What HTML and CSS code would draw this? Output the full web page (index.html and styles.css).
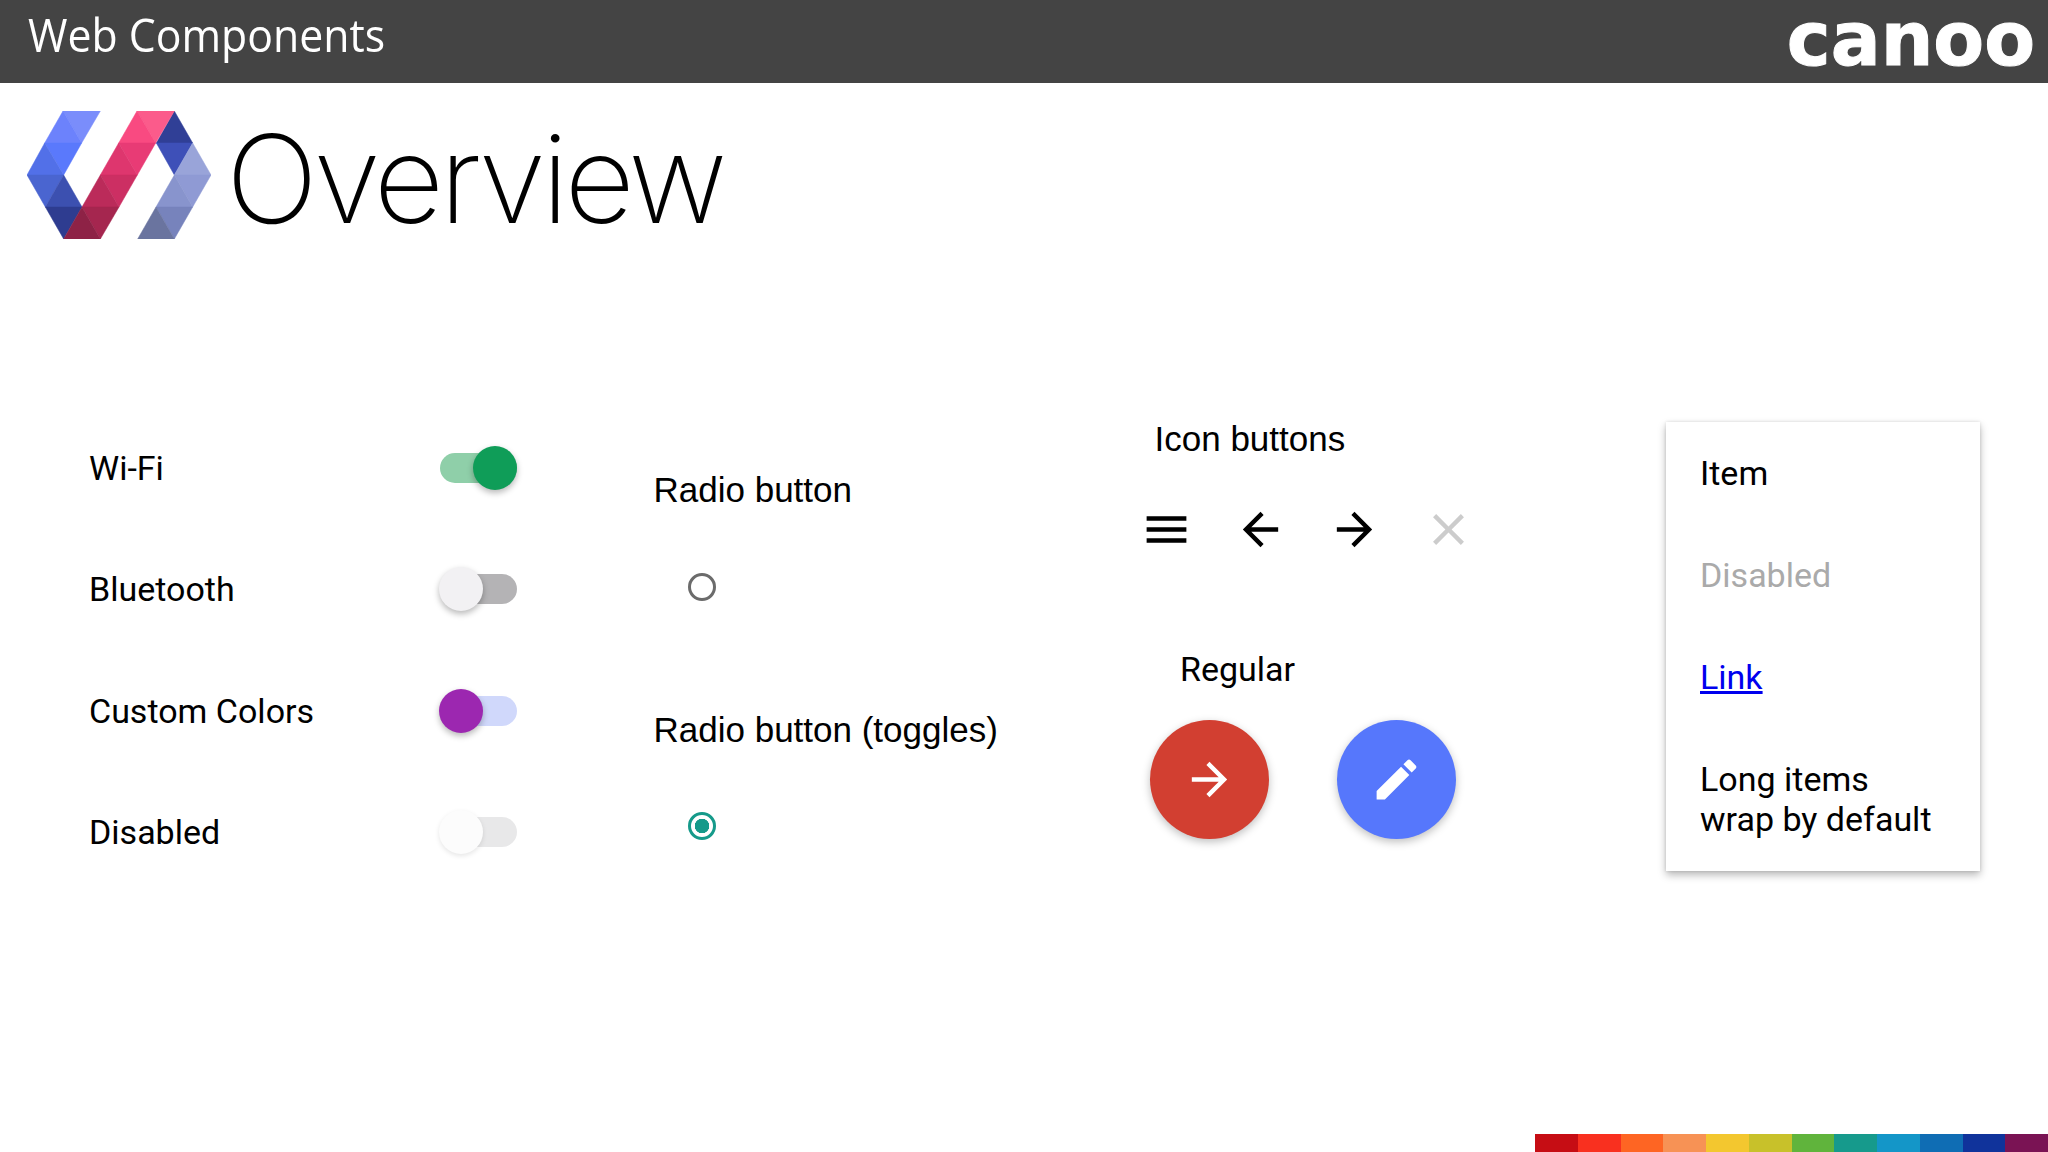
FILE: index.html
```html
<!DOCTYPE html>
<html lang="en">
<head>
<meta charset="utf-8">
<title>Web Components</title>
<link rel="stylesheet" href="styles.css">
</head>
<body>
<header class="topbar">
  <div class="topbar-title">Web Components</div>
  <div class="brand">canoo</div>
</header>
<section class="hero">
  <svg class="logo" viewBox="35 36 552 384" aria-hidden="true">
    <g stroke-width="1.5">
      <polygon points="143,36 255,36 199,132" fill="#7a8dfb" stroke="#7a8dfb"/>
      <polygon points="143,36 88,132 199,132" fill="#6c82fc" stroke="#6c82fc"/>
      <polygon points="88,132 199,132 145,228" fill="#5a79fc" stroke="#5a79fc"/>
      <polygon points="88,132 35,228 145,228" fill="#5270e8" stroke="#5270e8"/>
      <polygon points="35,228 145,228 90,324" fill="#4a65d0" stroke="#4a65d0"/>
      <polygon points="145,228 90,324 200,324" fill="#3c50b0" stroke="#3c50b0"/>
      <polygon points="90,324 200,324 145,420" fill="#2e3c90" stroke="#2e3c90"/>
      <polygon points="477,36 532,132 423,132" fill="#303f96" stroke="#303f96"/>
      <polygon points="423,132 532,132 477,228" fill="#3e50b8" stroke="#3e50b8"/>
      <polygon points="532,132 587,228 477,228" fill="#99a4d9" stroke="#99a4d9"/>
      <polygon points="477,228 587,228 532,324" fill="#8f9ad4" stroke="#8f9ad4"/>
      <polygon points="477,228 422,324 532,324" fill="#8894cd" stroke="#8894cd"/>
      <polygon points="422,324 532,324 477,420" fill="#7783bc" stroke="#7783bc"/>
      <polygon points="422,324 367,420 477,420" fill="#6a749f" stroke="#6a749f"/>
      <polygon points="365,36 477,36 421,132" fill="#fb5b8b" stroke="#fb5b8b"/>
      <polygon points="365,36 310,132 421,132" fill="#f94a81" stroke="#f94a81"/>
      <polygon points="310,132 421,132 366,228" fill="#e83b75" stroke="#e83b75"/>
      <polygon points="310,132 255,228 366,228" fill="#de366e" stroke="#de366e"/>
      <polygon points="255,228 366,228 311,324" fill="#cc2f63" stroke="#cc2f63"/>
      <polygon points="255,228 200,324 311,324" fill="#bb2b5a" stroke="#bb2b5a"/>
      <polygon points="200,324 311,324 255,420" fill="#a5264f" stroke="#a5264f"/>
      <polygon points="200,324 145,420 255,420" fill="#8e2246" stroke="#8e2246"/>
    </g>
  </svg>
  <h1 class="hero-title">Overview</h1>
</section>
<main class="demo">
  <div class="toggles">
    <div class="toggle-row"><span class="label">Wi-Fi</span><span class="toggle on green"><span class="track"></span><span class="thumb"></span></span></div>
    <div class="toggle-row"><span class="label">Bluetooth</span><span class="toggle"><span class="track"></span><span class="thumb"></span></span></div>
    <div class="toggle-row"><span class="label">Custom Colors</span><span class="toggle custom"><span class="track"></span><span class="thumb"></span></span></div>
    <div class="toggle-row"><span class="label">Disabled</span><span class="toggle disabled"><span class="track"></span><span class="thumb"></span></span></div>
  </div>
  <div class="radios">
    <div class="helv">Radio button</div>
    <span class="radio"></span>
    <div class="helv second">Radio button (toggles)</div>
    <span class="radio checked"></span>
  </div>
  <div class="buttons">
    <div class="helv icons-title">Icon buttons</div>
    <div class="icon-row">
      <svg class="icon" viewBox="0 0 24 24"><path d="M3 18h18v-2H3v2zm0-5h18v-2H3v2zm0-7v2h18V6H3z"/></svg>
      <svg class="icon" viewBox="0 0 24 24"><path d="M20 11H7.83l5.59-5.59L12 4l-8 8 8 8 1.41-1.41L7.83 13H20v-2z"/></svg>
      <svg class="icon" viewBox="0 0 24 24"><path d="M12 4l-1.41 1.41L16.17 11H4v2h12.17l-5.58 5.59L12 20l8-8z"/></svg>
      <svg class="icon muted" viewBox="0 0 24 24"><path d="M19 6.41L17.59 5 12 10.59 6.41 5 5 6.41 10.59 12 5 17.59 6.41 19 12 13.41 17.59 19 19 17.59 13.41 12z"/></svg>
    </div>
    <div class="label regular">Regular</div>
    <div class="fab-row">
      <span class="fab red"><svg class="icon white" viewBox="0 0 24 24"><path d="M12 4l-1.41 1.41L16.17 11H4v2h12.17l-5.58 5.59L12 20l8-8z"/></svg></span>
      <span class="fab blue"><svg class="icon white" viewBox="0 0 24 24"><path d="M3 17.25V21h3.75L17.81 9.94l-3.75-3.75L3 17.25zM20.71 7.04c.39-.39.39-1.02 0-1.41l-2.34-2.34c-.39-.39-1.02-.39-1.41 0l-1.83 1.83 3.75 3.75 1.83-1.83z"/></svg></span>
    </div>
  </div>
  <div class="menu">
    <div class="menu-item">Item</div>
    <div class="menu-item dim">Disabled</div>
    <div class="menu-item"><a class="menu-link" href="#">Link</a></div>
    <div class="menu-item">Long items<br>wrap by default</div>
  </div>
</main>
<footer class="rainbow">
  <span class="c1"></span><span class="c2"></span><span class="c3"></span><span class="c4"></span><span class="c5"></span><span class="c6"></span><span class="c7"></span><span class="c8"></span><span class="c9"></span><span class="c10"></span><span class="c11"></span><span class="c12"></span>
</footer>
</body>
</html>
```
FILE: styles.css
```css
* { box-sizing: border-box; }
html, body { margin: 0; padding: 0; }
body {
  width: 2048px;
  height: 1152px;
  display: flex;
  flex-direction: column;
  background: #fff;
  color: #000;
  font-family: Roboto, sans-serif;
  overflow: hidden;
}
.topbar {
  height: 83px;
  flex: none;
  background: #444;
  color: #fff;
  display: flex;
  justify-content: space-between;
  padding: 0 13px 0 28px;
}
.topbar-title {
  font-family: "Open Sans", sans-serif;
  font-size: 46px;
  line-height: 68px;
  transform: scaleX(.93);
  transform-origin: left center;
}
.brand {
  font-family: "DejaVu Sans", sans-serif;
  font-weight: 700;
  font-size: 74px;
  line-height: 78px;
  -webkit-text-stroke: 1px #fff;
}
.hero {
  flex: none;
  height: 316px;
  padding: 28px 0 0 27px;
  display: flex;
  align-items: flex-start;
}
.logo { width: 184px; height: 128px; flex: none; filter: blur(.6px); }
.hero-title {
  margin: 4px 0 0 15px;
  font-family: Inter, sans-serif;
  font-weight: 200;
  font-size: 122px;
  letter-spacing: -4.4px;
  line-height: 128px;
}
.demo {
  flex: 1;
  display: grid;
  grid-template-columns: 566px 485px 526px 314px;
  align-items: start;
  padding-left: 89px;
}
.label { font-size: 34px; line-height: 40px; }
.helv { font-family: "Liberation Sans", sans-serif; font-size: 35px; line-height: 40px; }
.toggles { padding-top: 8px; }
.toggle-row {
  height: 121.5px;
  display: flex;
  align-items: center;
  width: 428px;
  justify-content: space-between;
}
.toggle { position: relative; display: block; width: 78px; height: 44px; }
.track {
  position: absolute;
  left: 1px; right: 0; top: 7px;
  height: 30px;
  border-radius: 15px;
  background: #b4b3b5;
}
.thumb {
  position: absolute;
  left: 0; top: 0;
  width: 44px; height: 44px;
  border-radius: 50%;
  background: #f2f1f3;
  box-shadow: 0 3px 6px rgba(0,0,0,.28);
}
.toggle.on .thumb { left: 34px; }
.green .track { background: #8fcfa9; }
.green .thumb { background: #0f9d58; }
.custom .track { background: #d0d8fb; }
.custom .thumb { background: #9c27b0; }
.disabled .track { background: #e8e8e9; }
.disabled .thumb { background: #fcfcfc; box-shadow: 0 2px 5px rgba(0,0,0,.1); }
.radios { padding-top: 71px; margin-left: -1.5px; }
.radio {
  display: block;
  width: 28px; height: 28px;
  margin: 63px 0 0 34.5px;
  border: 3.5px solid #6b6b6b;
  border-radius: 50%;
}
.second { margin-top: 109px; }
.radio.checked {
  margin-top: 62px;
  border-color: #159a8a;
  background: radial-gradient(circle, #159a8a 0 7px, #fff 7.5px);
}
.buttons { padding-top: 20px; }
.icons-title { margin-left: 14.5px; }
.icon-row { display: flex; gap: 41px; margin-top: 43.5px; }
.icon { width: 53px; height: 53px; display: block; fill: #000; flex: none; }
.icon.muted { fill: #ccc; }
.icon.white { fill: #fff; }
.regular { margin: 93.5px 0 0 40px; }
.fab-row { display: flex; gap: 68px; margin: 31px 0 0 10px; }
.fab {
  width: 119px; height: 119px;
  border-radius: 50%;
  display: flex;
  align-items: center;
  justify-content: center;
  box-shadow: 0 3px 8px rgba(0,0,0,.25);
}
.fab.red { background: #d23f31; }
.fab.blue { background: #5677fc; }
.menu {
  margin-top: 23px;
  width: 314px;
  height: 449px;
  background: #fff;
  box-shadow: 0 4px 8px rgba(0,0,0,.28), 0 0 3px rgba(0,0,0,.12);
}
.menu-item { padding: 31px 34px; font-size: 34px; line-height: 40px; }
.dim { color: #aaa; }
.menu-link { color: #00e; text-decoration: underline; }
.rainbow { flex: none; height: 18px; display: flex; justify-content: flex-end; }
.rainbow span { width: 42.75px; }
.c1 { background: #c60d14; }
.c2 { background: #f9301f; }
.c3 { background: #fe6523; }
.c4 { background: #f79255; }
.c5 { background: #f3c72f; }
.c6 { background: #c8c12a; }
.c7 { background: #60b43c; }
.c8 { background: #169a8c; }
.c9 { background: #1496c8; }
.c10 { background: #0f6db4; }
.c11 { background: #10339b; }
.c12 { background: #7a1354; }
```
